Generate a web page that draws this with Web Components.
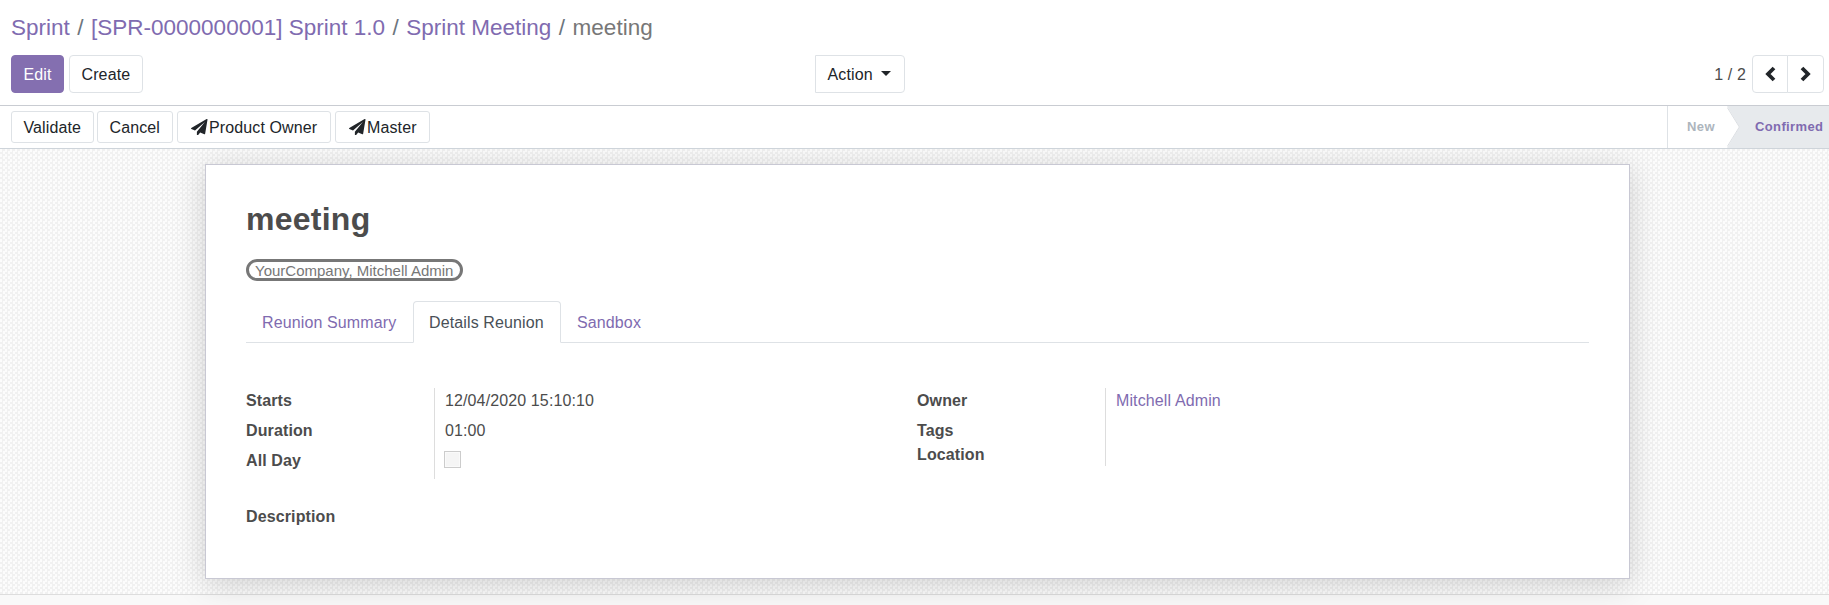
<!DOCTYPE html>
<html lang="en">
<head>
<meta charset="utf-8">
<title>meeting</title>
<style>
html,body{margin:0;height:100%;overflow:hidden;background:#fff}
body{font:16px/24px "Liberation Sans",Arial,sans-serif;letter-spacing:.12px;color:#4c4c4c;--brand:#806bb0}
</style>
</head>
<body>
<meeting-app></meeting-app>
<script>
function define(name, html) {
  const tpl = document.createElement('template');
  tpl.innerHTML = html;
  customElements.define(name, class extends HTMLElement {
    constructor() {
      super();
      this.attachShadow({ mode: 'open' }).appendChild(tpl.content.cloneNode(true));
    }
  });
}

define('ui-button', `
<style>
:host{display:block}
button{display:flex;align-items:center;box-sizing:border-box;width:100%;height:38px;margin:0;padding:2px 0 0 11.500px;border:1px solid #dee2e6;border-radius:4px;background:#fff;color:#212529;font:inherit;letter-spacing:inherit;white-space:nowrap}
:host([primary]) button{background:#846fb0;border-color:#846fb0;color:#fff}
:host([small]) button{height:32px;border-radius:3px}
:host([menu]) button{border-radius:0 4px 4px 0}
:host([first]) button,:host([last]) button{padding:0;justify-content:center}
:host([first]) button{border-radius:4px 0 0 4px}
:host([last]) button{border-radius:0 4px 4px 0}
</style>
<button type="button"><slot></slot></button>`);

define('plane-icon', `
<style>:host{display:block;width:16.500px;height:16.500px;margin:-2px 1.500px 0 1.500px}svg{display:block}</style>
<svg width="16.500" height="16.500" viewBox="0 0 1792 1792"><path fill="#212529" d="M1764 11q33 24 27 64l-256 1536q-5 29-32 45-14 8-31 8-11 0-24-5l-453-185-242 295q-18 23-49 23-13 0-22-4-19-7-30.500-23.500t-11.500-36.500v-349l864-1059-1069 925-395-162q-37-14-40-55-2-40 32-59l1664-960q15-9 32-9 20 0 36 11z"/></svg>`);

define('crumb-trail', `
<style>
:host{display:flex;font-size:22.500px;line-height:28px;letter-spacing:0;white-space:pre}
::slotted(a){color:var(--brand)}
::slotted(span){color:#777}
::slotted(i){font-style:normal;color:#6c757d;padding:0 7.500px}
</style><slot></slot>`);

define('control-panel', `
<style>
:host{display:block;box-sizing:border-box;height:106px;padding:14px 5px 0 11px;border-bottom:1px solid #c9ccd2}
.row{display:grid;grid-template-columns:804px 1fr auto;height:38px;margin-top:13px}
.left{display:flex;gap:5px}.mid{justify-self:start;width:90px}
.edit{width:53px}.create{width:74px}
.caret{margin-left:8px;border:5px solid transparent;border-top-color:#212529;border-bottom:0;margin-top:-4px}
.right{display:flex;align-items:center}.right span{margin:2px 6px 0 0}
.prev{width:36px}.next{width:37px;margin-left:-1px}
svg{display:block}
</style>
<crumb-trail><a>Sprint</a><i>/</i><a>[SPR-0000000001] Sprint 1.0</a><i>/</i><a>Sprint Meeting</a><i>/</i><span>meeting</span></crumb-trail>
<div class="row">
 <div class="left"><ui-button class="edit" primary>Edit</ui-button><ui-button class="create">Create</ui-button></div>
 <ui-button class="mid" menu>Action<div class="caret"></div></ui-button>
 <div class="right"><span>1 / 2</span>
  <ui-button class="prev" first><svg width="12" height="16" viewBox="0 0 12 16"><path d="M10 2 4 8l6 6" fill="none" stroke="#212529" stroke-width="3.800"/></svg></ui-button>
  <ui-button class="next" last><svg width="12" height="16" viewBox="0 0 12 16"><path d="m2 2 6 6-6 6" fill="none" stroke="#212529" stroke-width="3.800"/></svg></ui-button>
 </div>
</div>`);

define('status-bar', `
<style>
:host{display:flex;justify-content:space-between;box-sizing:border-box;height:43px;padding-left:11px;border-bottom:1px solid #ced4da;background:#fff}
.acts{display:grid;grid-template-columns:82px 76px 154px 95px;column-gap:4px;align-items:center;height:42px}
.acts>:first-child{width:83px}
.steps{display:flex;box-sizing:border-box;width:162px;border-left:1px solid #dee2e6;font:bold 13px/42px "Liberation Sans",Arial,sans-serif;letter-spacing:.38px}
.new{width:59px;box-sizing:border-box;padding-left:19px;color:#adb5bd}
.done{display:flex;flex:1;background:#e7eaed;color:var(--brand)}
svg{display:block;margin-right:15px}
</style>
<div class="acts"><ui-button small>Validate</ui-button><ui-button small>Cancel</ui-button><ui-button small><plane-icon></plane-icon>Product Owner</ui-button><ui-button small><plane-icon></plane-icon>Master</ui-button></div>
<div class="steps"><div class="new">New</div><div class="done"><svg width="13" height="42" viewBox="0 0 13 42"><path fill="#fff" d="M0 0v42l12.500-21z"/><path fill="none" stroke="#dcdfe3" d="m.3 1.500 12 19.500-12 19.500"/></svg>Confirmed</div></div>`);

define('tab-strip', `
<style>
:host{display:flex;height:42px;box-sizing:border-box;border-bottom:1px solid #dee2e6}
::slotted(*){box-sizing:border-box;height:42px;padding:9px 15px 0;border:1px solid transparent;line-height:24px;color:var(--brand);white-space:nowrap}
::slotted(:first-child){width:167px}
::slotted(.on){width:148px;border-color:#dee2e6 #dee2e6 #fff;border-radius:4px 4px 0 0;color:#495057}
</style><slot></slot>`);

define('field-group', `
<style>
:host{display:grid;grid-template-columns:188px 1fr}
.labels{font-weight:bold}
.values{border-left:1px solid #ddd;padding-left:10px;height:var(--group-height,91px);box-sizing:border-box}
::slotted(div){box-sizing:border-box;height:24px;padding-top:1px;margin-bottom:6px}
::slotted(.tight){margin-bottom:0}
</style>
<div class="labels"><slot name="label"></slot></div><div class="values"><slot></slot></div>`);

define('check-box', `
<style>:host{display:block;box-sizing:border-box;width:17px;height:17px;margin:2px 0 0 -1px;border:1px solid #ccc;background:#f5f5f5;box-shadow:inset 0 0 0 1px #fafafa}</style>`);

define('form-sheet', `
<style>
:host{display:block;box-sizing:border-box;width:1425px;height:415px;margin:15px 0 0 205px;padding:35px 40px 0;border:1px solid #c8c8d3;background:#fff;box-shadow:0 5px 30px rgba(0,0,0,.17)}
h1{margin:0;font-size:32px;line-height:38px;letter-spacing:.25px}
.tag{display:block;box-sizing:border-box;width:217px;height:22px;margin:21px 0 20px;border:3px solid #777;border-radius:11px;padding-left:6px;font-size:15px;line-height:17px;letter-spacing:0;color:#777;white-space:nowrap}
.groups{display:grid;grid-template-columns:671px 1fr;margin-top:45px}
.short{--group-height:78px}
a{color:var(--brand)}
.desc{font-weight:bold;margin-top:26px}
</style>
<h1>meeting</h1>
<span class="tag">YourCompany, Mitchell Admin</span>
<tab-strip><div>Reunion Summary</div><div class="on">Details Reunion</div><div>Sandbox</div></tab-strip>
<div class="groups">
<field-group><div slot="label">Starts</div><div slot="label">Duration</div><div slot="label">All Day</div><div>12/04/2020 15:10:10</div><div>01:00</div><div><check-box></check-box></div></field-group>
<field-group class="short"><div slot="label">Owner</div><div slot="label" class="tight">Tags</div><div slot="label" class="tight">Location</div><div><a>Mitchell Admin</a></div></field-group>
</div>
<div class="desc">Description</div>`);

define('meeting-app', `
<style>
:host{display:flex;flex-direction:column;height:605px;overflow:hidden}
control-panel,status-bar{position:relative;z-index:2;background:#fff}
main{position:relative;z-index:1;display:flow-root;height:445px;border-bottom:1px solid #ddd;background:#fff repeating-conic-gradient(#f1f1f1 0 25%,#fcfcfc 0 50%) 0 0/5px 5px}
footer{flex:1;background:#f9f9f9}
</style>
<control-panel></control-panel><status-bar></status-bar>
<main><form-sheet></form-sheet></main><footer></footer>`);
</script>
</body>
</html>
